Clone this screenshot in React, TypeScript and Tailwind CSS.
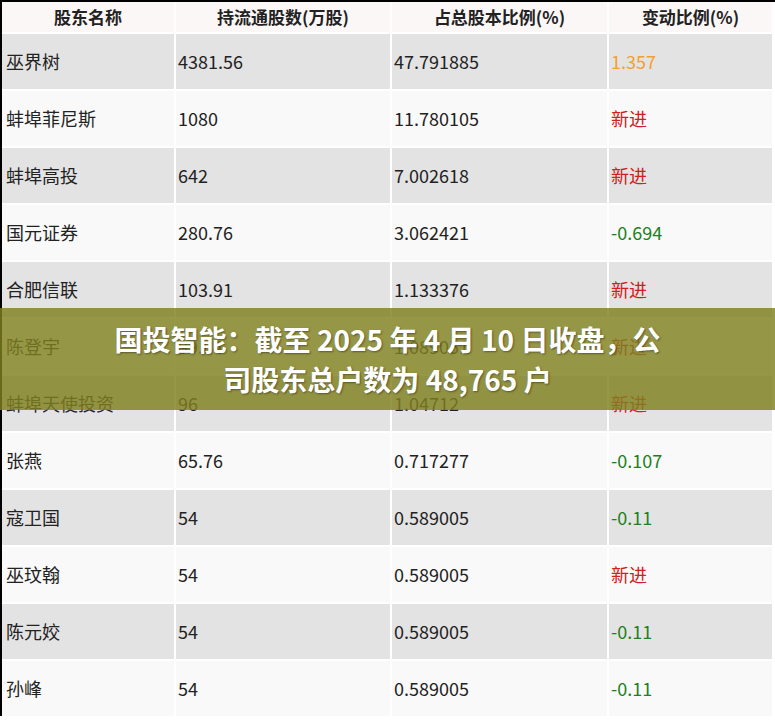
const rows: [string, string, string, string, string][] = [
  ["巫界树", "4381.56", "47.791885", "1.357", "text-[#f0a030]"],
  ["蚌埠菲尼斯", "1080", "11.780105", "新进", "text-[#d02020]"],
  ["蚌埠高投", "642", "7.002618", "新进", "text-[#d02020]"],
  ["国元证券", "280.76", "3.062421", "-0.694", "text-[#208020]"],
  ["合肥信联", "103.91", "1.133376", "新进", "text-[#d02020]"],
  ["陈登宇", "99.84", "1.089051", "新进", "text-[#d02020]"],
  ["蚌埠天使投资", "96", "1.04712", "新进", "text-[#d02020]"],
  ["张燕", "65.76", "0.717277", "-0.107", "text-[#208020]"],
  ["寇卫国", "54", "0.589005", "-0.11", "text-[#208020]"],
  ["巫玟翰", "54", "0.589005", "新进", "text-[#d02020]"],
  ["陈元姣", "54", "0.589005", "-0.11", "text-[#208020]"],
  ["孙峰", "54", "0.589005", "-0.11", "text-[#208020]"],
];

export default function App() {
  return (
    <div className="relative w-[775px] h-[721px] overflow-hidden bg-white" style={{ fontFamily: '"Noto Sans CJK SC", "Noto Sans", sans-serif' }}>
      <div className="border-l-2 border-t-2 border-black">
        <div className="grid grid-cols-[172px_214px_215px_163px] gap-[2px] text-[18px] text-[#222]">
          {["股东名称", "持流通股数(万股)", "占总股本比例(%)", "变动比例(%)"].map((h) => (
            <div key={h} className="h-[30px] flex items-center justify-center font-bold text-[17px] bg-[#fcf7f7]">{h}</div>
          ))}
          {rows.map((r, i) => {
            const bg = i % 2 === 0 ? "bg-[#e3e3e3]" : "bg-[#f9f9f9]";
            return [
              <div key={i + "a"} className={`h-[55px] flex items-center pl-[4px] ${bg}`}>{r[0]}</div>,
              <div key={i + "b"} className={`h-[55px] flex items-center pl-[2px] ${bg}`}>{r[1]}</div>,
              <div key={i + "c"} className={`h-[55px] flex items-center pl-[2px] ${bg}`}>{r[2]}</div>,
              <div key={i + "d"} className={`h-[55px] flex items-center pl-[2px] ${bg} ${r[4]}`}>{r[3]}</div>,
            ];
          })}
        </div>
      </div>
      <div className="absolute left-0 right-0 top-[308px] h-[102px] bg-[rgba(128,128,32,0.82)] flex items-center justify-center text-center">
        <div className="text-white font-bold text-[28px] leading-[40px] [text-shadow:1px_1px_2px_rgba(0,0,0,0.4)]">
          国投智能：截至 2025 年 4 月 10 日收盘，公<br />司股东总户数为 48,765 户
        </div>
      </div>
    </div>
  );
}
